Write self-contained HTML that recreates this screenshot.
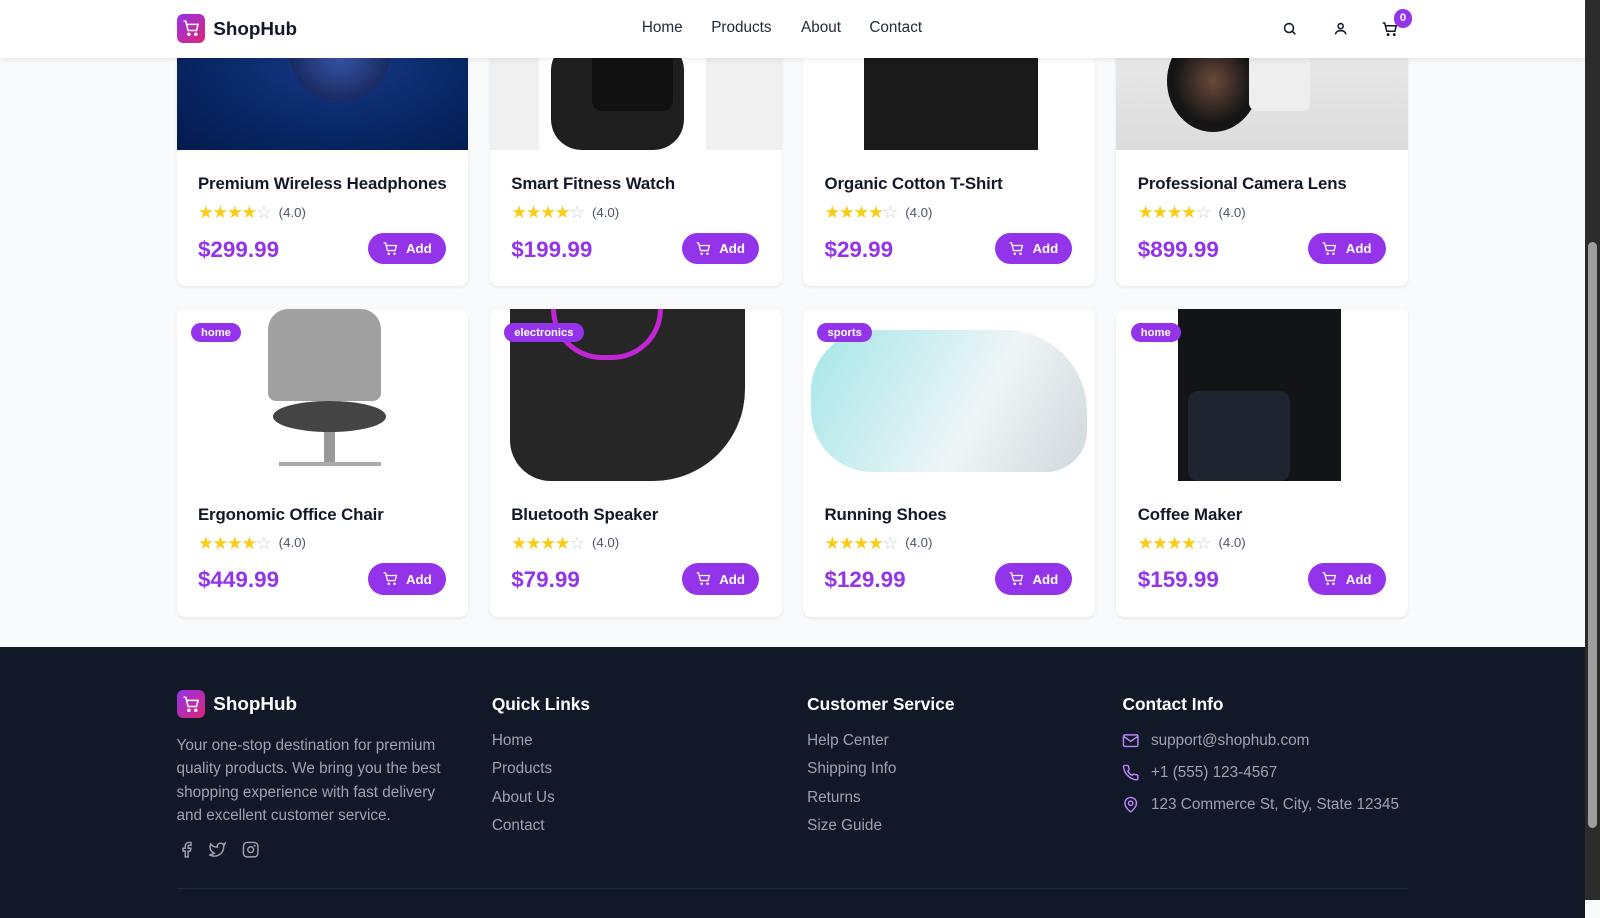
<!DOCTYPE html>
<html><head><meta charset="utf-8"><style>
*{box-sizing:border-box;margin:0;padding:0}
html{zoom:1.0204}
body{width:1568px;height:882px;overflow:hidden;background:#f9fafb;font-family:"Liberation Sans",sans-serif;position:relative}
.sb{position:absolute;left:1553px;top:0;width:15px;height:882px;background:#2b2b2b}
.sb i{position:absolute;left:3px;top:237px;width:9px;height:574px;background:#9e9e9e;border-radius:5px}
.hdr{position:absolute;left:0;top:0;width:1553px;height:57px;background:#fff;box-shadow:0 2px 6px rgba(0,0,0,.08);z-index:5}
.logo{position:absolute;display:flex;align-items:center;gap:8px;font-weight:bold;font-size:18.5px}
.lg{width:28px;height:28px;border-radius:6px;background:linear-gradient(135deg,#9333ea,#db2777);display:flex;align-items:center;justify-content:center}
.nav{position:absolute;top:19px;font-size:15px;color:#1f2937}
.card{position:absolute;width:286px;background:#fff;border-radius:8px;overflow:hidden;box-shadow:0 1px 3px rgba(0,0,0,.08)}
.img{height:168px;position:relative}
.tx{position:absolute;width:286px}
.t{position:absolute;left:21px;top:24px;font-size:16.5px;font-weight:600;color:#111827;white-space:nowrap;letter-spacing:-.1px}
.st{position:absolute;left:21px;top:53px;font-size:13px;color:#4b5563;display:flex;align-items:center}
.st span{color:#facc15;font-size:17px;line-height:16px;letter-spacing:-1px}
.st span.e{color:#c9ced6;margin-right:8px}
.p{position:absolute;left:21px;top:85px;font-size:22px;font-weight:bold;color:#9333ea}
.b{position:absolute;left:188px;top:81px;width:76px;height:31px;border-radius:16px;background:#9333ea;color:#fff;font-size:13px;font-weight:600;display:flex;align-items:center;justify-content:center;gap:8px}
.tag{position:absolute;left:14px;top:14px;background:#9333ea;color:#fff;font-size:11px;font-weight:bold;padding:3px 10px;border-radius:10px}
.ft{position:absolute;left:0;top:634px;width:1553px;height:266px;background:#111827}
.fh{position:absolute;top:46px;color:#fff;font-size:17px;font-weight:bold}
.fl{position:absolute;color:#9ca3af;font-size:15px}
</style></head><body>
<div class="hdr">
 <div class="logo" style="left:173px;top:14px;color:#111827"><div class="lg"><svg width="18" height="18" viewBox="0 0 24 24" fill="none" stroke="#fff" stroke-width="2"><path d="M2 3h3l3 12h11l2-8H6"/><circle cx="9" cy="20" r="1.3"/><circle cx="18" cy="20" r="1.3"/></svg></div>ShopHub</div>
 <div class="nav" style="left:629px">Home</div><div class="nav" style="left:697px">Products</div><div class="nav" style="left:785px">About</div><div class="nav" style="left:852px">Contact</div>
 <svg style="position:absolute;left:1256px;top:21px" width="15" height="15" viewBox="0 0 24 24" fill="none" stroke="#111827" stroke-width="2.4"><circle cx="11" cy="11" r="7"/><path d="M16 16l5 5"/></svg>
 <svg style="position:absolute;left:1306px;top:21px" width="15" height="15" viewBox="0 0 24 24" fill="none" stroke="#111827" stroke-width="2.4"><circle cx="12" cy="8" r="4"/><path d="M4 21c0-4 4-6 8-6s8 2 8 6"/></svg>
 <svg style="position:absolute;left:1354px;top:21px" width="16" height="16" viewBox="0 0 24 24" fill="none" stroke="#111827" stroke-width="2.2"><path d="M1 3h3l3 12h12l2-8H5"/><circle cx="9" cy="20" r="1"/><circle cx="18" cy="20" r="1"/></svg>
 <div style="position:absolute;left:1366px;top:9px;width:18px;height:18px;border-radius:50%;background:#9333ea;color:#fff;font-size:11px;font-weight:bold;text-align:center;line-height:18px">0</div>
</div>

<div class="card" style="left:173px;top:-21px;height:301px"><div class="img" style="background:radial-gradient(ellipse at 55% 40%,#1e3a8a,#0a2a6b 50%,#041a4d)"><div style="position:absolute;left:110px;top:20px;width:100px;height:100px;border-radius:50%;background:radial-gradient(#3b5bb0,#0b1640)"></div></div></div>
<div class="card" style="left:480px;top:-21px;height:301px"><div class="img" style="background:#f0f0f0"><div style="position:absolute;left:48px;top:0;width:164px;height:168px;background:#fff"></div><div style="position:absolute;left:60px;top:60px;width:130px;height:108px;border-radius:30px;background:#1f1f1f"></div><div style="position:absolute;left:100px;top:70px;width:80px;height:60px;background:#111;border-radius:10px"></div></div></div>
<div class="card" style="left:787px;top:-21px;height:301px"><div class="img" style="background:#fff"><div style="position:absolute;left:60px;top:0;width:170px;height:168px;background:#1a1a1a"></div><div style="position:absolute;left:20px;top:0;width:250px;height:60px;background:#1a1a1a;clip-path:polygon(0 0,100% 0,88% 100%,12% 100%)"></div></div></div>
<div class="card" style="left:1094px;top:-21px;height:301px"><div class="img" style="background:linear-gradient(#f2f2f2,#dcdcdc)"><div style="position:absolute;left:50px;top:50px;width:90px;height:100px;border-radius:50%;background:radial-gradient(#6b4a3a,#151515 60%)"></div><div style="position:absolute;left:130px;top:60px;width:60px;height:70px;background:#eee;border-radius:8px"></div></div></div>

<div class="card" style="left:173px;top:303px;height:302px"><div class="img" style="background:#fff"><div style="position:absolute;left:90px;top:0;width:110px;height:90px;background:#777;border-radius:20px 20px 8px 8px;opacity:.7"></div><div style="position:absolute;left:95px;top:90px;width:110px;height:30px;background:#444;border-radius:50%"></div><div style="position:absolute;left:145px;top:120px;width:10px;height:30px;background:#999"></div><div style="position:absolute;left:100px;top:150px;width:100px;height:18px;border-top:4px solid #aaa"></div><span class="tag">home</span></div></div>
<div class="card" style="left:480px;top:303px;height:302px"><div class="img" style="background:#fff"><div style="position:absolute;left:20px;top:0;width:230px;height:168px;background:#262626;border-radius:0 0 90px 40px"></div><div style="position:absolute;left:60px;top:0;width:110px;height:50px;border:5px solid #c026d3;border-top:none;border-radius:0 0 60px 60px"></div><span class="tag">electronics</span></div></div>
<div class="card" style="left:787px;top:303px;height:302px"><div class="img" style="background:#fff"><div style="position:absolute;left:8px;top:20px;width:270px;height:140px;background:linear-gradient(120deg,#a5e6e8,#eef5f7 60%,#cfd8dc);border-radius:60px 80px 40px 60px"></div><span class="tag">sports</span></div></div>
<div class="card" style="left:1094px;top:303px;height:302px"><div class="img" style="background:#fff"><div style="position:absolute;left:60px;top:0;width:160px;height:168px;background:#121418"></div><div style="position:absolute;left:70px;top:80px;width:100px;height:88px;background:#1e2530;border-radius:10px"></div><span class="tag">home</span></div></div>

<div class="tx" style="left:173px;top:147px"><div class="t">Premium Wireless Headphones</div><div class="st"><span>★★★★</span><span class="e">☆</span>(4.0)</div><div class="p">$299.99</div><div class="b"><svg width="15" height="15" viewBox="0 0 24 24" fill="none" stroke="#fff" stroke-width="2"><path d="M1 3h3l3 12h12l2-8H5"/><circle cx="9" cy="20" r="1"/><circle cx="18" cy="20" r="1"/></svg>Add</div></div>
<div class="tx" style="left:480px;top:147px"><div class="t">Smart Fitness Watch</div><div class="st"><span>★★★★</span><span class="e">☆</span>(4.0)</div><div class="p">$199.99</div><div class="b"><svg width="15" height="15" viewBox="0 0 24 24" fill="none" stroke="#fff" stroke-width="2"><path d="M1 3h3l3 12h12l2-8H5"/><circle cx="9" cy="20" r="1"/><circle cx="18" cy="20" r="1"/></svg>Add</div></div>
<div class="tx" style="left:787px;top:147px"><div class="t">Organic Cotton T-Shirt</div><div class="st"><span>★★★★</span><span class="e">☆</span>(4.0)</div><div class="p">$29.99</div><div class="b"><svg width="15" height="15" viewBox="0 0 24 24" fill="none" stroke="#fff" stroke-width="2"><path d="M1 3h3l3 12h12l2-8H5"/><circle cx="9" cy="20" r="1"/><circle cx="18" cy="20" r="1"/></svg>Add</div></div>
<div class="tx" style="left:1094px;top:147px"><div class="t">Professional Camera Lens</div><div class="st"><span>★★★★</span><span class="e">☆</span>(4.0)</div><div class="p">$899.99</div><div class="b"><svg width="15" height="15" viewBox="0 0 24 24" fill="none" stroke="#fff" stroke-width="2"><path d="M1 3h3l3 12h12l2-8H5"/><circle cx="9" cy="20" r="1"/><circle cx="18" cy="20" r="1"/></svg>Add</div></div>
<div class="tx" style="left:173px;top:471px"><div class="t">Ergonomic Office Chair</div><div class="st"><span>★★★★</span><span class="e">☆</span>(4.0)</div><div class="p">$449.99</div><div class="b"><svg width="15" height="15" viewBox="0 0 24 24" fill="none" stroke="#fff" stroke-width="2"><path d="M1 3h3l3 12h12l2-8H5"/><circle cx="9" cy="20" r="1"/><circle cx="18" cy="20" r="1"/></svg>Add</div></div>
<div class="tx" style="left:480px;top:471px"><div class="t">Bluetooth Speaker</div><div class="st"><span>★★★★</span><span class="e">☆</span>(4.0)</div><div class="p">$79.99</div><div class="b"><svg width="15" height="15" viewBox="0 0 24 24" fill="none" stroke="#fff" stroke-width="2"><path d="M1 3h3l3 12h12l2-8H5"/><circle cx="9" cy="20" r="1"/><circle cx="18" cy="20" r="1"/></svg>Add</div></div>
<div class="tx" style="left:787px;top:471px"><div class="t">Running Shoes</div><div class="st"><span>★★★★</span><span class="e">☆</span>(4.0)</div><div class="p">$129.99</div><div class="b"><svg width="15" height="15" viewBox="0 0 24 24" fill="none" stroke="#fff" stroke-width="2"><path d="M1 3h3l3 12h12l2-8H5"/><circle cx="9" cy="20" r="1"/><circle cx="18" cy="20" r="1"/></svg>Add</div></div>
<div class="tx" style="left:1094px;top:471px"><div class="t">Coffee Maker</div><div class="st"><span>★★★★</span><span class="e">☆</span>(4.0)</div><div class="p">$159.99</div><div class="b"><svg width="15" height="15" viewBox="0 0 24 24" fill="none" stroke="#fff" stroke-width="2"><path d="M1 3h3l3 12h12l2-8H5"/><circle cx="9" cy="20" r="1"/><circle cx="18" cy="20" r="1"/></svg>Add</div></div>

<div class="ft">
 <div class="logo" style="left:173px;top:42px;color:#fff"><div class="lg"><svg width="18" height="18" viewBox="0 0 24 24" fill="none" stroke="#fff" stroke-width="2"><path d="M2 3h3l3 12h11l2-8H6"/><circle cx="9" cy="20" r="1.3"/><circle cx="18" cy="20" r="1.3"/></svg></div>ShopHub</div>
 <div class="fl" style="left:173px;top:85px;width:280px;line-height:23px">Your one-stop destination for premium quality products. We bring you the best shopping experience with fast delivery and excellent customer service.</div>
 <svg style="position:absolute;left:174px;top:190px" width="17" height="17" viewBox="0 0 24 24" fill="none" stroke="#9ca3af" stroke-width="2"><path d="M18 2h-3a5 5 0 0 0-5 5v3H7v4h3v8h4v-8h3l1-4h-4V7a1 1 0 0 1 1-1h3z"/></svg>
 <svg style="position:absolute;left:204px;top:190px" width="18" height="17" viewBox="0 0 24 24" fill="none" stroke="#9ca3af" stroke-width="2"><path d="M23 3a10.9 10.9 0 0 1-3.14 1.53 4.48 4.48 0 0 0-7.86 3v1A10.66 10.66 0 0 1 3 4s-4 9 5 13a11.64 11.64 0 0 1-7 2c9 5 20 0 20-11.5a4.5 4.5 0 0 0-.08-.83A7.72 7.72 0 0 0 23 3z"/></svg>
 <svg style="position:absolute;left:237px;top:190px" width="17" height="17" viewBox="0 0 24 24" fill="none" stroke="#9ca3af" stroke-width="2"><rect x="2" y="2" width="20" height="20" rx="5"/><circle cx="12" cy="12" r="4"/><circle cx="17.5" cy="6.5" r=".5"/></svg>
 <div class="fh" style="left:482px">Quick Links</div>
 <div class="fl" style="left:482px;top:83px">Home</div><div class="fl" style="left:482px;top:111px">Products</div><div class="fl" style="left:482px;top:139px">About Us</div><div class="fl" style="left:482px;top:167px">Contact</div>
 <div class="fh" style="left:791px">Customer Service</div>
 <div class="fl" style="left:791px;top:83px">Help Center</div><div class="fl" style="left:791px;top:111px">Shipping Info</div><div class="fl" style="left:791px;top:139px">Returns</div><div class="fl" style="left:791px;top:167px">Size Guide</div>
 <div class="fh" style="left:1100px">Contact Info</div>
 <svg style="position:absolute;left:1100px;top:83px" width="17" height="17" viewBox="0 0 24 24" fill="none" stroke="#c084fc" stroke-width="2"><rect x="2" y="4" width="20" height="16" rx="2"/><path d="M2 6l10 7 10-7"/></svg>
 <div class="fl" style="left:1128px;top:83px">support@shophub.com</div>
 <svg style="position:absolute;left:1100px;top:115px" width="17" height="17" viewBox="0 0 24 24" fill="none" stroke="#c084fc" stroke-width="2"><path d="M22 16.9v3a2 2 0 0 1-2.2 2 19.8 19.8 0 0 1-8.6-3.1 19.5 19.5 0 0 1-6-6A19.8 19.8 0 0 1 2.1 4.2 2 2 0 0 1 4.1 2h3a2 2 0 0 1 2 1.7c.1 1 .4 1.9.7 2.8a2 2 0 0 1-.5 2.1L8 9.9a16 16 0 0 0 6 6l1.3-1.3a2 2 0 0 1 2.1-.4c.9.3 1.8.6 2.8.7a2 2 0 0 1 1.7 2z"/></svg>
 <div class="fl" style="left:1128px;top:115px">+1 (555) 123-4567</div>
 <svg style="position:absolute;left:1100px;top:146px" width="17" height="17" viewBox="0 0 24 24" fill="none" stroke="#c084fc" stroke-width="2"><path d="M20 10c0 6-8 12-8 12s-8-6-8-12a8 8 0 0 1 16 0z"/><circle cx="12" cy="10" r="3"/></svg>
 <div class="fl" style="left:1128px;top:146px">123 Commerce St, City, State 12345</div>
 <div style="position:absolute;left:173px;top:236px;width:1207px;height:1px;background:#1f2937"></div>
</div>
<div class="sb"><i></i></div>
</body></html>
